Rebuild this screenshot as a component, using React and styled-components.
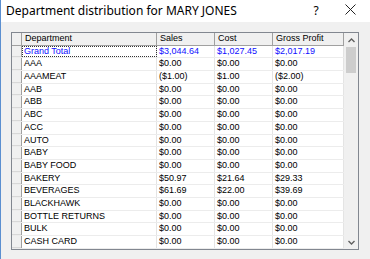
import React from 'react';
import styled, { createGlobalStyle } from 'styled-components';

const rows = [
  { name: 'Grand Total', sales: '$3,044.64', cost: '$1,027.45', profit: '$2,017.19', total: true },
  { name: 'AAA', sales: '$0.00', cost: '$0.00', profit: '$0.00' },
  { name: 'AAAMEAT', sales: '($1.00)', cost: '$1.00', profit: '($2.00)' },
  { name: 'AAB', sales: '$0.00', cost: '$0.00', profit: '$0.00' },
  { name: 'ABB', sales: '$0.00', cost: '$0.00', profit: '$0.00' },
  { name: 'ABC', sales: '$0.00', cost: '$0.00', profit: '$0.00' },
  { name: 'ACC', sales: '$0.00', cost: '$0.00', profit: '$0.00' },
  { name: 'AUTO', sales: '$0.00', cost: '$0.00', profit: '$0.00' },
  { name: 'BABY', sales: '$0.00', cost: '$0.00', profit: '$0.00' },
  { name: 'BABY FOOD', sales: '$0.00', cost: '$0.00', profit: '$0.00' },
  { name: 'BAKERY', sales: '$50.97', cost: '$21.64', profit: '$29.33' },
  { name: 'BEVERAGES', sales: '$61.69', cost: '$22.00', profit: '$39.69' },
  { name: 'BLACKHAWK', sales: '$0.00', cost: '$0.00', profit: '$0.00' },
  { name: 'BOTTLE RETURNS', sales: '$0.00', cost: '$0.00', profit: '$0.00' },
  { name: 'BULK', sales: '$0.00', cost: '$0.00', profit: '$0.00' },
  { name: 'CASH CARD', sales: '$0.00', cost: '$0.00', profit: '$0.00' },
];

const App = () => (
  <>
    <GlobalStyle />
    <Window>
      <TitleBar>
        <Title>Department distribution for MARY JONES</Title>
        <Help>?</Help>
        <Close>
          <svg width="11" height="11" viewBox="0 0 11 11">
            <path d="M0.5 0.5 L10.5 10.5 M10.5 0.5 L0.5 10.5" stroke="#222" strokeWidth="1" fill="none" />
          </svg>
        </Close>
      </TitleBar>
      <Body>
        <Grid>
          <Table>
            <HeaderRow>
              <HeadCell />
              <HeadCell>Department</HeadCell>
              <HeadCell>Sales</HeadCell>
              <HeadCell>Cost</HeadCell>
              <HeadCell>Gross Profit</HeadCell>
            </HeaderRow>
            {rows.map((r) => (
              <Row key={r.name} $total={r.total}>
                <RowHead />
                <Cell $focus={r.total}>{r.name}</Cell>
                <Cell>{r.sales}</Cell>
                <Cell>{r.cost}</Cell>
                <Cell>{r.profit}</Cell>
              </Row>
            ))}
          </Table>
          <ScrollBar>
            <Arrow>
              <svg width="7" height="5" viewBox="0 0 7 5">
                <path d="M0.5 4 L3.5 1 L6.5 4" stroke="#606060" strokeWidth="1.4" fill="none" />
              </svg>
            </Arrow>
            <Track>
              <Thumb />
            </Track>
            <Arrow>
              <svg width="7" height="5" viewBox="0 0 7 5">
                <path d="M0.5 1 L3.5 4 L6.5 1" stroke="#606060" strokeWidth="1.4" fill="none" />
              </svg>
            </Arrow>
          </ScrollBar>
        </Grid>
      </Body>
    </Window>
  </>
);

const GlobalStyle = createGlobalStyle`
  body {
    margin: 0;
    background: #f0f0f0;
    overflow: hidden;
  }
`;

const Window = styled.div`
  width: 370px;
  height: 259px;
  box-sizing: border-box;
  border-left: 1px solid #5b8fd0;
  background: #f0f0f0;
  display: flex;
  flex-direction: column;
`;

const TitleBar = styled.div`
  height: 22px;
  flex: none;
  background: #fff;
  display: flex;
  align-items: center;
  padding-left: 5px;
  font-family: 'Noto Sans', sans-serif;
  font-size: 12px;
  color: #000;
`;

const Title = styled.div`
  flex: 1;
  margin-top: -2px;
`;

const Help = styled.div`
  width: 12px;
  margin-right: 23px;
  margin-top: -2px;
  text-align: center;
`;

const Close = styled.div`
  width: 11px;
  height: 11px;
  margin-right: 14px;
  margin-top: -3px;
  display: flex;
`;

const Body = styled.div`
  flex: 1;
  padding: 10px 0 0 10px;
`;

const Grid = styled.div`
  width: 348px;
  height: 218px;
  box-sizing: border-box;
  border: 1px solid #828790;
  background: #fff;
  display: flex;
`;

const Table = styled.div`
  width: 332px;
  display: flex;
  flex-direction: column;
  font-family: 'Liberation Sans', Arial, sans-serif;
  font-size: 9px;
`;

const cols = '10px 135px 58px 58px 71px';

const HeaderRow = styled.div`
  display: grid;
  grid-template-columns: ${cols};
  height: 12.7px;
  background: #f0f0f0;
  border-bottom: 1px solid #a0a0a0;
  box-sizing: border-box;
`;

const HeadCell = styled.div`
  border-right: 1px solid #a0a0a0;
  padding-left: 3px;
  line-height: 11.7px;
  color: #000;
  white-space: nowrap;
  overflow: hidden;
`;

const Row = styled.div`
  display: grid;
  grid-template-columns: ${cols};
  height: 12.7px;
  box-sizing: border-box;
  border-bottom: 1px solid #ececec;
  color: ${(p) => (p.$total ? '#1010ff' : '#000')};
`;

const RowHead = styled.div`
  background: #f0f0f0;
  border-right: 1px solid #a0a0a0;
  box-shadow: inset 0 -1px 0 #d8d8d8;
`;

const Cell = styled.div`
  border-right: 1px solid #e4e4e4;
  padding-left: 2px;
  line-height: 11.7px;
  white-space: nowrap;
  overflow: hidden;
  outline: ${(p) => (p.$focus ? '1px dotted #333' : 'none')};
  outline-offset: -1px;
`;

const ScrollBar = styled.div`
  flex: 1;
  background: #f0f0f0;
  display: flex;
  flex-direction: column;
`;

const Arrow = styled.div`
  height: 14px;
  display: flex;
  align-items: center;
  justify-content: center;
`;

const Track = styled.div`
  flex: 1;
  padding: 0 2px;
`;

const Thumb = styled.div`
  height: 26px;
  background: #cdcdcd;
`;

export default App;
